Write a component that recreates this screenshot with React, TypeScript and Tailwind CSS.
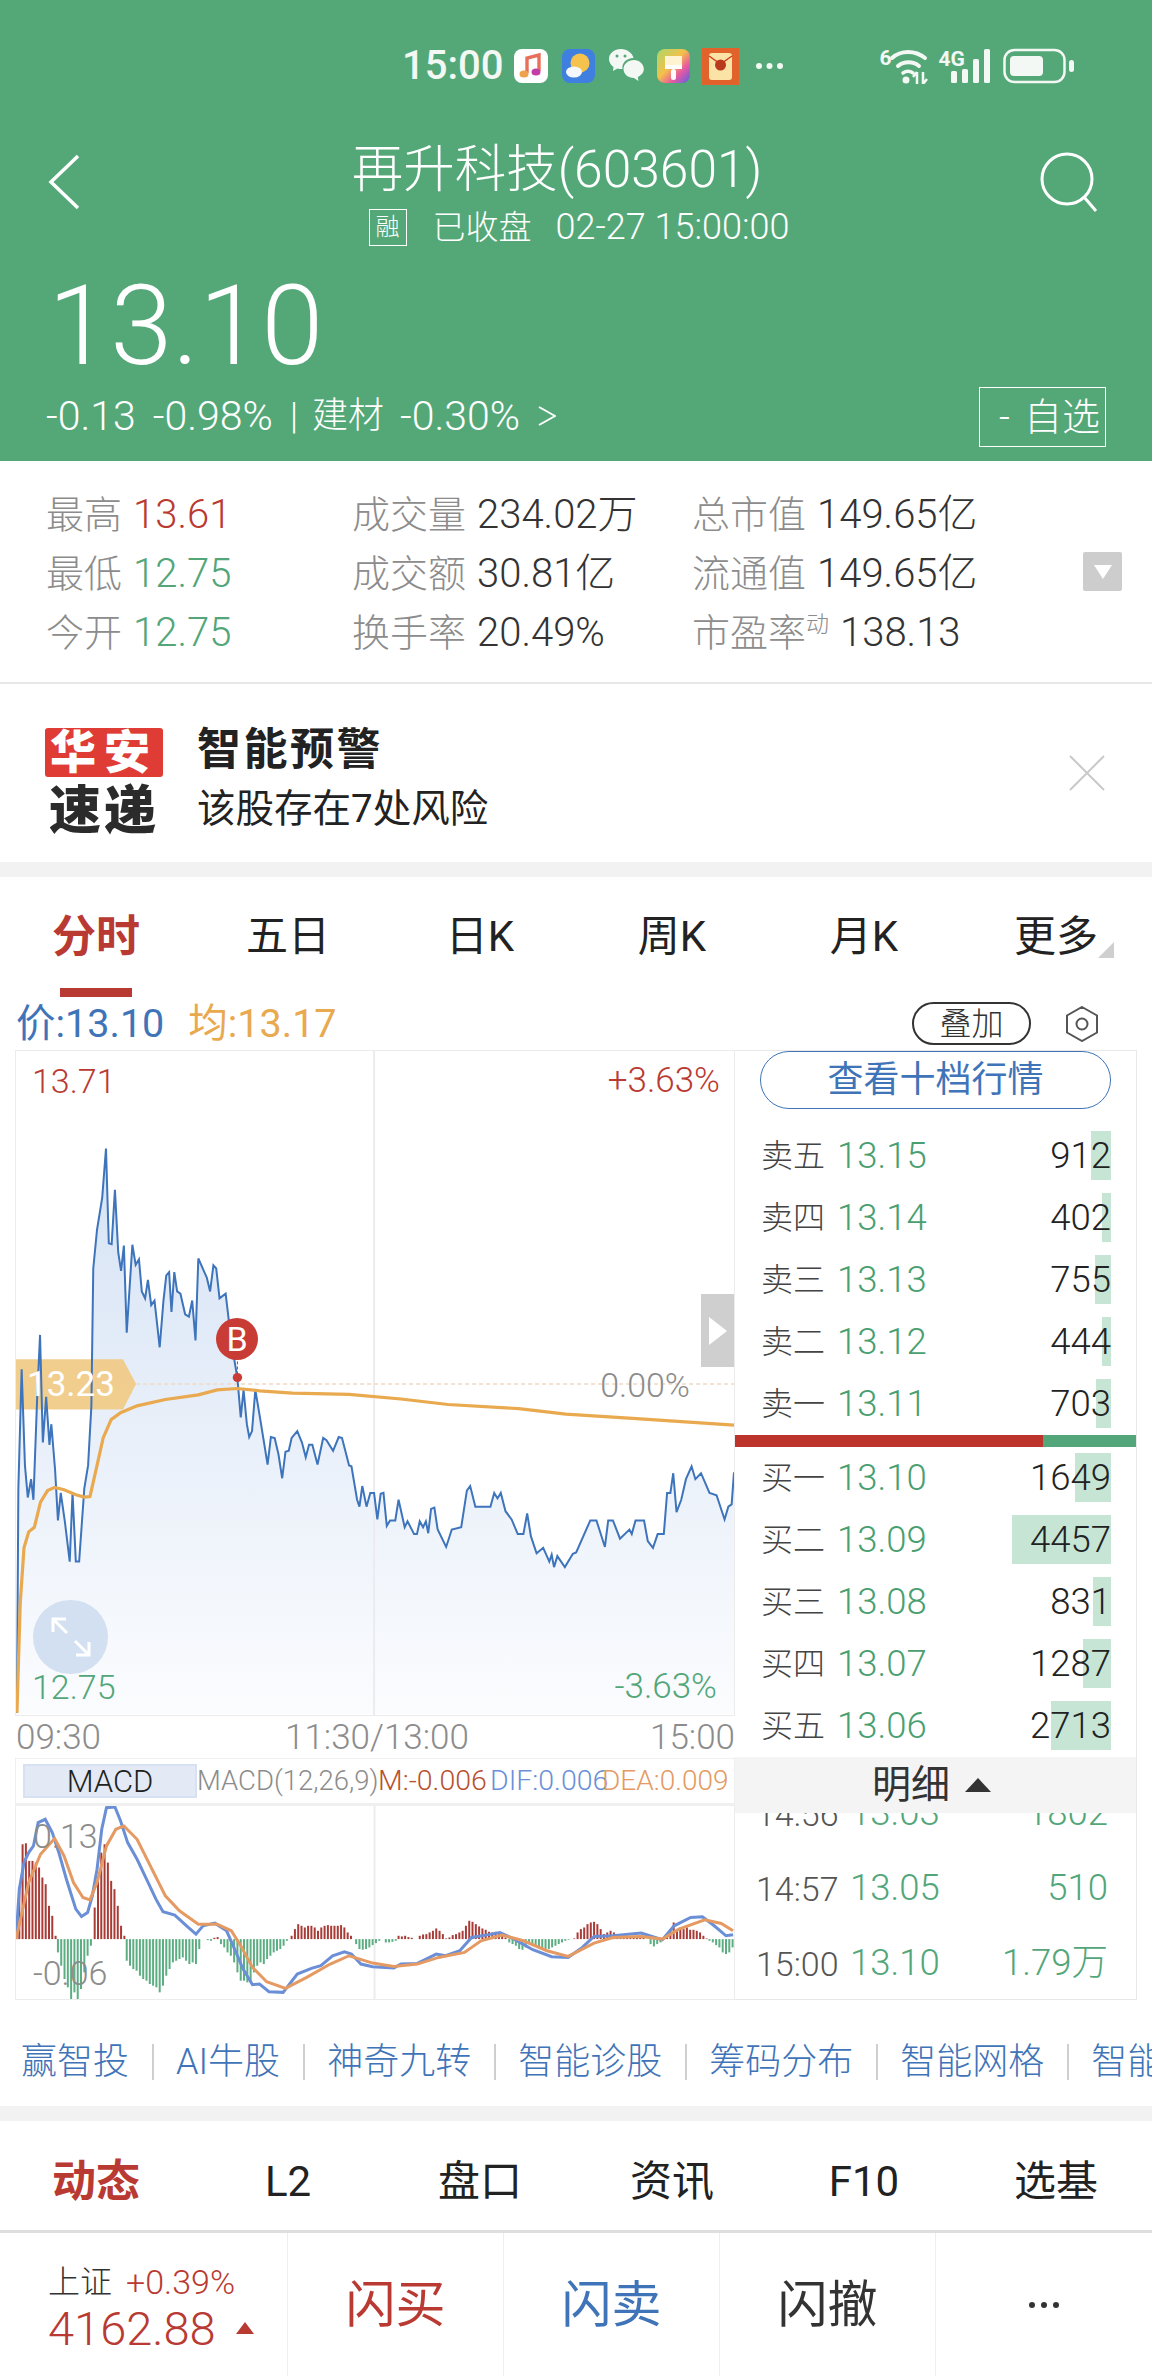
import React from "react";

// Intraday price trace in chart units (viewBox 33 45 1524 1450)
const priceLine: [number, number][] = [[35,1490],[38,1000],[45,740],[52,950],[58,1020],[65,980],[70,1025],[78,800],[84,665],[90,900],[97,800],[104,905],[108,860],[116,960],[122,1070],[128,1010],[137,1075],[147,1160],[153,1010],[160,1160],[167,1160],[178,1000],[186,950],[193,820],[197,520],[205,435],[216,365],[224,258],[230,465],[236,467],[243,348],[250,485],[256,525],[262,470],[268,660],[280,468],[287,512],[294,500],[300,570],[307,585],[313,545],[320,600],[327,590],[338,692],[346,590],[352,535],[358,528],[363,615],[369,528],[375,570],[382,575],[392,620],[400,625],[407,590],[414,677],[420,498],[438,540],[445,570],[452,513],[458,520],[465,585],[478,575],[490,680],[503,760],[510,845],[516,785],[523,860],[528,888],[534,875],[541,785],[550,840],[567,948],[574,888],[582,890],[590,925],[598,978],[605,920],[612,918],[618,890],[630,875],[640,900],[648,932],[655,905],[662,905],[673,948],[685,890],[692,895],[706,918],[718,888],[725,890],[740,950],[745,952],[757,1025],[762,1040],[768,995],[777,1040],[785,1010],[793,1010],[800,1068],[807,1012],[813,1010],[820,1082],[827,1070],[838,1070],[845,1025],[858,1085],[864,1072],[878,1100],[884,1100],[890,1072],[897,1085],[903,1072],[908,1098],[914,1045],[921,1042],[928,1090],[946,1128],[958,1090],[978,1085],[990,1005],[997,995],[1008,1040],[1040,1040],[1048,1010],[1055,1022],[1062,1010],[1072,1050],[1085,1068],[1098,1100],[1110,1100],[1118,1055],[1126,1105],[1138,1142],[1152,1130],[1165,1160],[1170,1145],[1175,1172],[1182,1148],[1198,1172],[1215,1143],[1222,1140],[1252,1070],[1265,1070],[1283,1128],[1290,1070],[1300,1070],[1315,1110],[1335,1090],[1340,1100],[1348,1070],[1366,1070],[1374,1115],[1385,1130],[1395,1100],[1408,1100],[1415,1010],[1422,1010],[1428,967],[1435,1052],[1445,1025],[1455,980],[1467,952],[1475,980],[1487,967],[1505,1010],[1520,1015],[1537,1068],[1545,1040],[1552,1035],[1557,965]];

const avgLine: [number, number][] = [[35,1490],[42,1250],[50,1130],[60,1095],[72,1085],[85,1030],[100,1005],[115,998],[135,1003],[160,1014],[178,1019],[190,1018],[205,950],[218,890],[235,850],[255,835],[290,820],[350,806],[420,796],[460,785],[503,782],[550,787],[620,792],[740,795],[850,805],[950,817],[1100,826],[1200,838],[1350,848],[1557,862]];

// MACD series in chart units (viewBox 33 200 1524 580), zero axis at y = 600
const difLine: [number, number][] = [[33,600],[40,450],[50,370],[60,340],[70,320],[80,250],[95,240],[110,280],[125,345],[140,420],[150,465],[160,510],[172,532],[185,520],[195,470],[205,390],[215,270],[225,205],[243,203],[255,245],[270,310],[290,360],[310,420],[330,480],[345,518],[370,528],[395,560],[415,585],[430,560],[455,552],[480,575],[500,640],[515,690],[535,737],[550,735],[570,758],[600,760],[630,705],[660,688],[680,680],[705,650],[730,638],[745,645],[765,675],[790,683],[835,687],[850,675],[885,673],[925,645],[945,650],[975,635],[1000,595],[1030,588],[1060,580],[1090,600],[1130,632],[1170,653],[1205,655],[1235,625],[1260,592],[1300,590],[1360,582],[1405,602],[1430,560],[1465,535],[1490,533],[1515,560],[1540,590],[1555,587]];

const deaLine: [number, number][] = [[33,600],[60,430],[85,345],[115,298],[135,350],[155,430],[175,475],[190,482],[205,430],[225,320],[245,270],[262,260],[290,300],[320,385],[350,470],[380,515],[420,555],[460,555],[490,575],[510,620],[535,685],[565,728],[605,748],[650,715],[700,675],[740,650],[790,672],[835,682],[885,675],[930,655],[985,640],[1020,605],[1065,588],[1110,605],[1160,635],[1205,652],[1260,612],[1300,595],[1360,592],[1405,600],[1440,570],[1495,542],[1530,553],[1555,575]];

// Histogram runs: [start x, bar tip y for each 7-unit step]
const macdRuns: [number, number[]][] = [
  [40,[445,315,312,365,365,370,385,415,435,500,530,590]],
  [122,[640,680,720,745,780,760,780,750,700,650,620]],
  [200,[505,420,340,315,370,425,450,500,560,590]],
  [268,[665,680,690,695,710,720,725,735,740,745,760,740,710,690,670,665,660,655,665,675,670,675,630]],
  [440,[603,605,596,594]],
  [468,[615,625,640,650,670,700,725,725,730,730,700,680,670,675,660,650,640,635,630,620,605]],
  [618,[590,570,555,560,565,560,560,565,575,565,560,558,560,560,560,558,565,580,590]],
  [755,[615,630,632,630,625,618,612,605]],
  [818,[610,610,608,605]],
  [845,[590,592,590,594,596]],
  [890,[590,586,585,580,575,568,575,585,598,595,588,585,580,575,560,545,548,555,562,568,572,578,580,578,580,585,595]],
  [1080,[610,615,620,630,632,625,615,620,620,625,630,635,630,625,620,615,610,605,602]],
  [1218,[598,580,570,565,555,550,548,555,570,585,580,575,580,585,590,590,590,590,590,590,590,590]],
  [1380,[615,622,615,610]],
  [1415,[590,570,550,570,565,570,565,572,572,575,580,590,598]],
  [1505,[605,610,618,625,640,645,640,625]],
];

const toPts = (line: [number, number][]) => line.map((p) => p.join(",")).join(" ");

const sells = [
  { label: "卖五", price: "13.15", vol: "912", bar: 20 },
  { label: "卖四", price: "13.14", vol: "402", bar: 9 },
  { label: "卖三", price: "13.13", vol: "755", bar: 16 },
  { label: "卖二", price: "13.12", vol: "444", bar: 9 },
  { label: "卖一", price: "13.11", vol: "703", bar: 15 },
];
const buys = [
  { label: "买一", price: "13.10", vol: "1649", bar: 36 },
  { label: "买二", price: "13.09", vol: "4457", bar: 99 },
  { label: "买三", price: "13.08", vol: "831", bar: 18 },
  { label: "买四", price: "13.07", vol: "1287", bar: 28 },
  { label: "买五", price: "13.06", vol: "2713", bar: 60 },
];
const ticks = [
  { t: "14:56", p: "13.03", v: "1802" },
  { t: "14:57", p: "13.05", v: "510" },
  { t: "15:00", p: "13.10", v: "1.79万" },
];
const tools = ["赢智投", "AI牛股", "神奇九转", "智能诊股", "筹码分布", "智能网格", "智能"];

function BookRow({ row }: { row: { label: string; price: string; vol: string; bar: number } }) {
  return (
    <div className="relative flex h-[62px] items-center pl-[26px] pr-[25px]">
      <div className="absolute right-[25px] top-[6px] h-[49px] bg-[#c6e5d5]" style={{ width: row.bar }} />
      <span className="relative w-[76px] text-[32px] leading-none font-light text-[#444]">{row.label}</span>
      <span className="relative text-[36.500px] leading-none font-light text-[#4a9f71]">{row.price}</span>
      <span className="relative ml-auto text-[36.500px] leading-none font-light text-[#222]">{row.vol}</span>
    </div>
  );
}

function Stat({ name, value, color }: { name: React.ReactNode; value: string; color: string }) {
  return (
    <div className="flex h-[59px] items-center leading-none">
      <span className="mr-[11px] flex h-full items-center text-[38px] font-light text-[#8c8c8c]">{name}</span>
      <span className={`text-[40px] font-light ${color}`}>{value}</span>
    </div>
  );
}

function StatusIcons() {
  return (
    <div className="flex items-center">
      <svg width="34" height="34" viewBox="0 0 34 34" className="ml-[11px]">
        <rect width="34" height="34" rx="8" fill="#fff" />
        <path d="M13 24V9l12-3v16" fill="none" stroke="#e8705a" strokeWidth="3.4" />
        <ellipse cx="10" cy="25" rx="4.5" ry="3.6" fill="#efa24c" />
        <ellipse cx="22" cy="23" rx="4.5" ry="3.6" fill="#c33fa8" />
      </svg>
      <svg width="33" height="34" viewBox="0 0 33 34" className="ml-[14px]">
        <rect width="33" height="34" rx="8" fill="#3f7fe0" />
        <circle cx="18" cy="14" r="9.5" fill="#f6c24e" />
        <ellipse cx="12" cy="23" rx="8" ry="5.5" fill="#f4f7fb" />
      </svg>
      <svg width="37" height="38" viewBox="0 0 37 38" className="ml-[13px]">
        <path d="M13 2C6 2 1 6.500 1 12c0 3.500 2 6 4.500 8L5 24l4.500-2.500c2 .6 4 .7 5 .5-1-6 4-11 11-11C24.500 6 19 2 13 2z" fill="#f3f8f4" />
        <path d="M26 13c-6 0-10.500 4-10.500 9S20 31 26 31l4.500 3-.7-4c3-1.500 6-4 6-8 0-5-4.500-9-9.800-9z" fill="#f3f8f4" />
        <circle cx="9" cy="9" r="1.500" fill="#54a878" />
        <circle cx="17" cy="9" r="1.500" fill="#54a878" />
      </svg>
      <svg width="33" height="34" viewBox="0 0 33 34" className="ml-[12px]">
        <defs>
          <linearGradient id="brushBg" x1="0" y1="0" x2="1" y2="1">
            <stop offset="0" stopColor="#a9d86a" />
            <stop offset="0.45" stopColor="#f5c04a" />
            <stop offset="0.7" stopColor="#e85aa0" />
            <stop offset="1" stopColor="#5a5ce8" />
          </linearGradient>
        </defs>
        <rect width="33" height="34" rx="8" fill="url(#brushBg)" />
        <rect x="8" y="7" width="17" height="9" fill="#fff3d0" />
        <rect x="8" y="16" width="17" height="4" fill="#fff" />
        <rect x="14" y="20" width="5" height="11" rx="2.500" fill="#fff" />
      </svg>
      <svg width="37" height="37" viewBox="0 0 37 37" className="ml-[12px]">
        <rect width="37" height="37" fill="#e2622c" />
        <rect x="7" y="5" width="23" height="27" rx="3" fill="#fbe3a8" />
        <path d="M7 8l11.500 8L30 8" fill="none" stroke="#c9411e" strokeWidth="1.500" />
        <circle cx="18.500" cy="17" r="5.500" fill="#b93a1c" />
      </svg>
      <svg width="29" height="8" viewBox="0 0 29 8" className="ml-[16px]">
        <circle cx="4" cy="4" r="3" fill="#f3f8f4" />
        <circle cx="14.500" cy="4" r="3" fill="#f3f8f4" />
        <circle cx="25" cy="4" r="3" fill="#f3f8f4" />
      </svg>
      <div className="relative ml-[95px] h-[36px] w-[50px]">
        <span className="absolute left-0 top-0 text-[21px] leading-[20px] font-bold text-[#f3f8f4]">6</span>
        <svg width="50" height="36" viewBox="0 0 50 36">
          <path d="M13 10c9-8 23-8 33 0" fill="none" stroke="#f3f8f4" strokeWidth="4" strokeLinecap="round" />
          <path d="M19 18c6-5 15-5 21 0" fill="none" stroke="#f3f8f4" strokeWidth="4" strokeLinecap="round" />
          <path d="M24 25c3-2 7-2 10 0" fill="none" stroke="#f3f8f4" strokeWidth="3.500" strokeLinecap="round" />
          <circle cx="27" cy="32" r="3.500" fill="#f3f8f4" />
          <path d="M38 24v12M44 24v12M44 36l4-5M38 24l-4 5" fill="none" stroke="#f3f8f4" strokeWidth="2.500" />
        </svg>
      </div>
      <div className="relative ml-[9px] h-[34px] w-[52px]">
        <span className="absolute left-0 top-0 text-[21px] leading-[20px] font-bold text-[#f3f8f4]">4G</span>
        <svg width="52" height="34" viewBox="0 0 52 34">
          <rect x="13" y="22" width="6" height="12" rx="1.500" fill="#f3f8f4" />
          <rect x="24" y="20" width="6" height="14" rx="1.500" fill="#f3f8f4" />
          <rect x="35" y="10" width="6" height="24" rx="1.500" fill="#f3f8f4" />
          <rect x="46" y="0" width="6" height="34" rx="1.500" fill="#f3f8f4" />
        </svg>
      </div>
      <svg width="72" height="36" viewBox="0 0 72 36" className="ml-[13px]">
        <rect x="1.500" y="2" width="60" height="32" rx="10" fill="none" stroke="#f3f8f4" strokeWidth="2.500" />
        <rect x="7" y="8" width="33" height="20" rx="4" fill="#f3f8f4" />
        <rect x="66" y="12" width="5" height="12" rx="2.500" fill="#f3f8f4" />
      </svg>
    </div>
  );
}

function IntradayChart() {
  return (
    <div className="relative h-[666px] border border-[#ececec]">
      <svg className="absolute inset-0 h-full w-full" viewBox="33 45 1524 1450" preserveAspectRatio="none">
        <defs>
          <linearGradient id="areaFill" gradientUnits="userSpaceOnUse" x1="0" y1="258" x2="0" y2="1490">
            <stop offset="0" stopColor="#d6e3f5" />
            <stop offset="1" stopColor="#fbfcfe" />
          </linearGradient>
        </defs>
        <polygon points={`${toPts(priceLine)} 1557,1493 35,1493`} fill="url(#areaFill)" />
        <line x1="793" y1="45" x2="793" y2="1495" stroke="#ececf0" strokeWidth="2" vectorEffect="non-scaling-stroke" />
        <line x1="288" y1="772" x2="1557" y2="772" stroke="#efd9c2" strokeWidth="1.500" strokeDasharray="4 3" vectorEffect="non-scaling-stroke" />
        <polygon points="33,718 260,718 288,772 260,828 33,828" fill="#f0cb88" fillOpacity="0.95" />
        <polyline points={toPts(priceLine)} fill="none" stroke="#3d74bb" strokeWidth="2" vectorEffect="non-scaling-stroke" />
        <polyline points={toPts(avgLine)} fill="none" stroke="#e9a94e" strokeWidth="3.200" vectorEffect="non-scaling-stroke" />
        <line x1="503" y1="712" x2="503" y2="758" stroke="#c93b35" strokeWidth="1" strokeDasharray="3 2" vectorEffect="non-scaling-stroke" />
        <ellipse cx="503" cy="758" rx="10" ry="10" fill="#c93b35" />
      </svg>
      <span className="absolute left-[16px] top-[17px] text-[34px] leading-[26px] font-light text-[#b93a32]">13.71</span>
      <span className="absolute right-[14px] top-[17px] text-[35px] leading-[26px] font-light text-[#b93a32]">+3.63%</span>
      <span className="absolute bottom-[15px] left-[16px] text-[34px] leading-[26px] font-light text-[#52a679]">12.75</span>
      <span className="absolute bottom-[15px] right-[17px] text-[35px] leading-[26px] font-light text-[#52a679]">-3.63%</span>
      <span className="absolute left-[11px] top-[316px] text-[35px] leading-[36px] text-white">13.23</span>
      <span className="absolute right-[44px] top-[318px] text-[34px] leading-[32px] font-light text-[#8c8c8c]">0.00%</span>
      <div className="absolute left-[200px] top-[267px] flex h-[42px] w-[42px] items-center justify-center rounded-full bg-[#c93b35] text-[34px] leading-none text-white">B</div>
      <div className="absolute right-0 top-[243px] flex h-[73px] w-[33px] items-center justify-center bg-[#cfcfcf]">
        <svg width="20" height="30" viewBox="0 0 20 30"><path d="M1 1l18 14L1 29z" fill="#fff" /></svg>
      </div>
      <div className="absolute left-[17px] top-[549px] flex h-[74px] w-[75px] items-center justify-center rounded-full bg-[#d2e0f2]">
        <svg width="42" height="42" viewBox="0 0 42 42" fill="none" stroke="#fff" strokeWidth="3">
          <path d="M3 16V3h13M3 3l14 14M39 26v13H26M39 39L25 25" />
        </svg>
      </div>
    </div>
  );
}

function MacdChart() {
  const bars = macdRuns.flatMap(([start, tips]) => tips.map((y, i) => ({ x: start + i * 7, y })));
  return (
    <div className="relative h-[194px] border border-t-0 border-[#ececec]">
      <svg className="absolute inset-0 h-full w-full" viewBox="33 200 1524 580" preserveAspectRatio="none">
        <line x1="794" y1="200" x2="794" y2="780" stroke="#ececf0" strokeWidth="2" vectorEffect="non-scaling-stroke" />
        {bars.map((b) => (
          <line key={b.x} x1={b.x} y1="600" x2={b.x} y2={b.y} stroke={b.y < 600 ? "#a93b36" : "#5cae82"} strokeWidth="2" vectorEffect="non-scaling-stroke" />
        ))}
        <polyline points={toPts(difLine)} fill="none" stroke="#6b8fd6" strokeWidth="3" vectorEffect="non-scaling-stroke" />
        <polyline points={toPts(deaLine)} fill="none" stroke="#e49a62" strokeWidth="3" vectorEffect="non-scaling-stroke" />
      </svg>
      <span className="absolute left-[17px] top-[17px] text-[34px] leading-[26px] font-light text-[#8c8c8c]">0.13</span>
      <span className="absolute left-[17px] top-[154px] text-[34px] leading-[26px] font-light text-[#8c8c8c]">-0.06</span>
    </div>
  );
}

export default function App() {
  return (
    <div className="flex h-[2376px] w-[1152px] flex-col overflow-hidden bg-white font-[Roboto,'Noto_Sans_CJK_SC',sans-serif]">
      {/* Quote header */}
      <header className="h-[461px] bg-[#54a878] text-white">
        <div className="flex h-[132px] items-center pl-[402px]">
          <span className="text-[40px] leading-none font-medium text-[#f3f8f4]">15:00</span>
          <StatusIcons />
        </div>
        <div className="flex items-center justify-between pl-[48px] pr-[54px]">
          <svg width="32" height="56" viewBox="0 0 32 56" className="mb-[14px]" fill="none" stroke="#fff" strokeWidth="3.500">
            <path d="M30 2L3 28l27 26" />
          </svg>
          <div className="mr-[6px] flex flex-col items-center">
            <div className="flex h-[76px] items-center text-[51.500px] leading-none font-light">再升科技(603601)</div>
            <div className="ml-[44px] flex h-[38px] items-center">
              <span className="flex h-[37px] w-[38px] items-center justify-center border border-white text-[24px] leading-none font-light">融</span>
              <span className="ml-[26px] text-[33px] leading-none font-light">已收盘</span>
              <span className="ml-[24px] text-[36px] leading-none font-light whitespace-nowrap">02-27 15:00:00</span>
            </div>
          </div>
          <svg width="58" height="60" viewBox="0 0 58 60" className="mb-[14px]" fill="none" stroke="#fff" strokeWidth="3">
            <circle cx="27" cy="27" r="25" />
            <path d="M44 45l12 14" />
          </svg>
        </div>
        <div className="mt-[19px] flex h-[122px] items-center pl-[48px] text-[112px] leading-none font-light">13.10</div>
        <div className="flex h-[60px] items-center pl-[46px] pr-[46px] leading-none font-light">
          <span className="mb-[2px] text-[41px]">-0.13</span>
          <span className="mb-[2px] ml-[17px] text-[41px]">-0.98%</span>
          <span className="mb-[2px] ml-[17px] text-[36px]">|</span>
          <span className="mb-[2px] ml-[14px] text-[36px]">建材</span>
          <span className="mb-[2px] ml-[16px] text-[41px]">-0.30%</span>
          <svg width="18" height="20" viewBox="0 0 18 20" className="mb-[2px] ml-[18px]" fill="none" stroke="#fff" strokeWidth="2">
            <path d="M1 1l16 9-16 9" />
          </svg>
          <span className="ml-auto flex h-[60px] w-[127px] items-center border border-white pl-[19px] text-[38px]">
            -<span className="ml-[14px]">自选</span>
          </span>
        </div>
      </header>

      {/* Key figures */}
      <section className="flex h-[221px] pl-[46px] pr-[30px] pt-[24px]">
        <div className="w-[306px]">
          <Stat name="最高" value="13.61" color="text-[#b93a32]" />
          <Stat name="最低" value="12.75" color="text-[#52a679]" />
          <Stat name="今开" value="12.75" color="text-[#52a679]" />
        </div>
        <div className="w-[342px]">
          <Stat name="成交量" value="234.02万" color="text-[#333]" />
          <Stat name="成交额" value="30.81亿" color="text-[#333]" />
          <Stat name="换手率" value="20.49%" color="text-[#333]" />
        </div>
        <div className="-ml-[2px]">
          <Stat name="总市值" value="149.65亿" color="text-[#333]" />
          <Stat name="流通值" value="149.65亿" color="text-[#333]" />
          <Stat
            name={
              <>
                市盈率
                <span className="mb-[16px] text-[23px] leading-none">动</span>
              </>
            }
            value="138.13"
            color="text-[#333]"
          />
        </div>
        <div className="ml-auto mt-[67px] flex h-[39px] w-[39px] items-center justify-center rounded-[2px] bg-[#cdcdcd]">
          <svg width="20" height="16" viewBox="0 0 20 16"><path d="M1 1h18L10 15z" fill="#fff" /></svg>
        </div>
      </section>
      <div className="h-[2px] bg-[#e8e8e8]" />

      {/* Risk alert */}
      <section className="flex h-[178px] items-center pl-[45px] pr-[47px] pt-[14px]">
        <div className="flex w-[152px] flex-col">
          <div className="flex h-[49px] w-[118px] items-center justify-center rounded-[3px] bg-[#e03c36] text-[46px] leading-none font-black tracking-[8px] text-white">华安</div>
          <div className="mt-[14px] flex h-[42px] w-[118px] items-center justify-center text-[52px] leading-none font-black tracking-[3px] text-[#2b2b2b]">速递</div>
        </div>
        <div className="flex flex-col">
          <span className="flex h-[58px] items-center text-[44px] leading-none font-bold tracking-[2.500px] text-[#222]">智能预警</span>
          <span className="flex h-[60px] items-center text-[38.500px] leading-none text-[#222]">该股存在7处风险</span>
        </div>
        <svg width="36" height="36" viewBox="0 0 36 36" className="mb-[14px] ml-auto" fill="none" stroke="#c9c9c9" strokeWidth="2">
          <path d="M1 1l34 34M35 1L1 35" />
        </svg>
      </section>
      <div className="h-[15px] bg-[#f2f2f2]" />

      {/* Chart period tabs */}
      <nav className="grid h-[120px] grid-cols-6 items-center text-center text-[42px] leading-none text-[#222]">
        <div className="relative flex h-full items-center justify-center text-[44px] font-bold text-[#b93a32]">
          分时
          <span className="absolute bottom-0 left-[60px] h-[9px] w-[72px] bg-[#b93a32]" />
        </div>
        <div>五日</div>
        <div>日K</div>
        <div>周K</div>
        <div>月K</div>
        <div className="relative">
          更多
          <svg width="16" height="16" viewBox="0 0 16 16" className="absolute bottom-0 right-[38px]"><path d="M16 0v16H0z" fill="#cfcfcf" /></svg>
        </div>
      </nav>

      {/* Price and average readout */}
      <div className="flex h-[53px] items-center pl-[16px] pr-[53px] text-[39.500px] leading-none">
        <span className="text-[#3f74b8]">价:13.10</span>
        <span className="ml-[24px] text-[#e8a94f]">均:13.17</span>
        <span className="ml-auto flex h-[43px] w-[119px] items-center justify-center rounded-full border-2 border-[#333] text-[32px] leading-none font-light text-[#333]">叠加</span>
        <svg width="34" height="36" viewBox="0 0 34 36" className="ml-[34px]" fill="none" stroke="#555" strokeWidth="2">
          <path d="M17 1l15 8.500v17L17 35 2 26.500v-17z" />
          <circle cx="17" cy="18" r="5.500" />
        </svg>
      </div>

      {/* Charts and order book */}
      <section className="flex h-[950px] pl-[15px]">
        <div className="w-[720px]">
          <IntradayChart />
          <div className="flex h-[42px] items-center justify-between text-[35px] leading-none font-light text-[#8c8c8c]">
            <span className="ml-[1px]">09:30</span>
            <span className="ml-[3px]">11:30/13:00</span>
            <span>15:00</span>
          </div>
          <div className="flex h-[48px] items-center border border-b-[3px] border-[#f0f0f0] pl-[7px] leading-none font-light">
            <span className="flex h-[34px] w-[174px] items-center justify-center border-2 border-[#d8e1f1] bg-[#e3eaf6] text-[31px] font-light text-[#222]">MACD</span>
            <span className="w-[181px] text-[27.500px] whitespace-nowrap text-[#8c8c8c]">MACD(12,26,9)</span>
            <span className="w-[112px] text-[28.500px] whitespace-nowrap text-[#b9502f]">M:-0.006</span>
            <span className="w-[112px] text-[28.500px] whitespace-nowrap text-[#6b8fd6]">DIF:0.006</span>
            <span className="text-[28px] whitespace-nowrap text-[#e49a62]">DEA:0.009</span>
          </div>
          <MacdChart />
        </div>
        <div className="flex w-[402px] flex-col border border-l-0 border-[#e8e8e8]">
          <div className="mx-[25px] mb-[16px] flex h-[58px] items-center justify-center rounded-full border-[1.500px] border-[#3f74b8] text-[36px] leading-none text-[#3f74b8]">
            查看十档行情
          </div>
          {sells.map((r) => (
            <BookRow key={r.label} row={r} />
          ))}
          <div className="flex h-[12px]">
            <div className="w-[308px] bg-[#bd342c]" />
            <div className="flex-1 bg-[#52a679]" />
          </div>
          {buys.map((r) => (
            <BookRow key={r.label} row={r} />
          ))}
          <div className="relative z-10 flex h-[56px] items-center justify-center bg-[#f4f4f4] pr-[8px] text-[39px] leading-none text-[#333]">
            明细
            <svg width="26" height="14" viewBox="0 0 26 14" className="ml-[15px]"><path d="M13 0l13 14H0z" fill="#333" /></svg>
          </div>
          <div className="flex-1 overflow-hidden">
            <div className="-mt-[37px]">
              {ticks.map((t) => (
                <div key={t.t} className="flex h-[75px] items-center pl-[21px] pr-[28px] leading-none font-light">
                  <span className="w-[94px] text-[34px] text-[#555]">{t.t}</span>
                  <span className="text-[36.500px] text-[#52a679]">{t.p}</span>
                  <span className="ml-auto text-[36.500px] text-[#52a679]">{t.v}</span>
                </div>
              ))}
            </div>
          </div>
        </div>
      </section>

      {/* Feature links */}
      <div className="flex h-[106px] items-center overflow-hidden pl-[21px] pt-[18px] text-[36px] leading-none font-light whitespace-nowrap text-[#3f74b8]">
        {tools.map((tool, i) => (
          <React.Fragment key={tool}>
            {i > 0 && <span className="mx-[22.500px] h-[36px] w-[2px] shrink-0 bg-[#cfcfcf]" />}
            <span className="shrink-0">{tool}</span>
          </React.Fragment>
        ))}
      </div>
      <div className="h-[15px] bg-[#f2f2f2]" />

      {/* Section tabs */}
      <nav className="grid h-[109px] grid-cols-6 items-center pt-[13px] text-center text-[42px] leading-none text-[#222]">
        <div className="text-[44px] font-bold text-[#b93a32]">动态</div>
        <div>L2</div>
        <div>盘口</div>
        <div>资讯</div>
        <div>F10</div>
        <div>选基</div>
      </nav>
      <div className="h-[3px] bg-[#dedede]" />

      {/* Trade bar */}
      <footer className="flex flex-1 items-stretch">
        <div className="flex w-[288px] flex-col border-r border-[#eeeeee] pl-[48px] pt-[32px]">
          <div className="flex h-[34px] items-center leading-none font-light">
            <span className="text-[32px] text-[#333]">上证</span>
            <span className="ml-[14px] text-[34px] text-[#b93a32]">+0.39%</span>
          </div>
          <div className="mt-[5px] flex h-[48px] items-center leading-none">
            <span className="text-[47px] font-light text-[#b93a32]">4162.88</span>
            <svg width="18" height="12" viewBox="0 0 18 12" className="ml-[20px]"><path d="M9 0l9 12H0z" fill="#b93a32" /></svg>
          </div>
        </div>
        <div className="flex w-[216px] items-center justify-center border-r border-[#eeeeee] text-[50px] leading-none text-[#b93a32]">闪买</div>
        <div className="flex w-[216px] items-center justify-center border-r border-[#eeeeee] text-[50px] leading-none text-[#3f74b8]">闪卖</div>
        <div className="flex w-[216px] items-center justify-center border-r border-[#eeeeee] text-[50px] leading-none text-[#333]">闪撤</div>
        <div className="flex flex-1 items-center justify-center">
          <svg width="32" height="8" viewBox="0 0 32 8" fill="#333">
            <circle cx="4" cy="4" r="3" />
            <circle cx="16" cy="4" r="3" />
            <circle cx="28" cy="4" r="3" />
          </svg>
        </div>
      </footer>
    </div>
  );
}
